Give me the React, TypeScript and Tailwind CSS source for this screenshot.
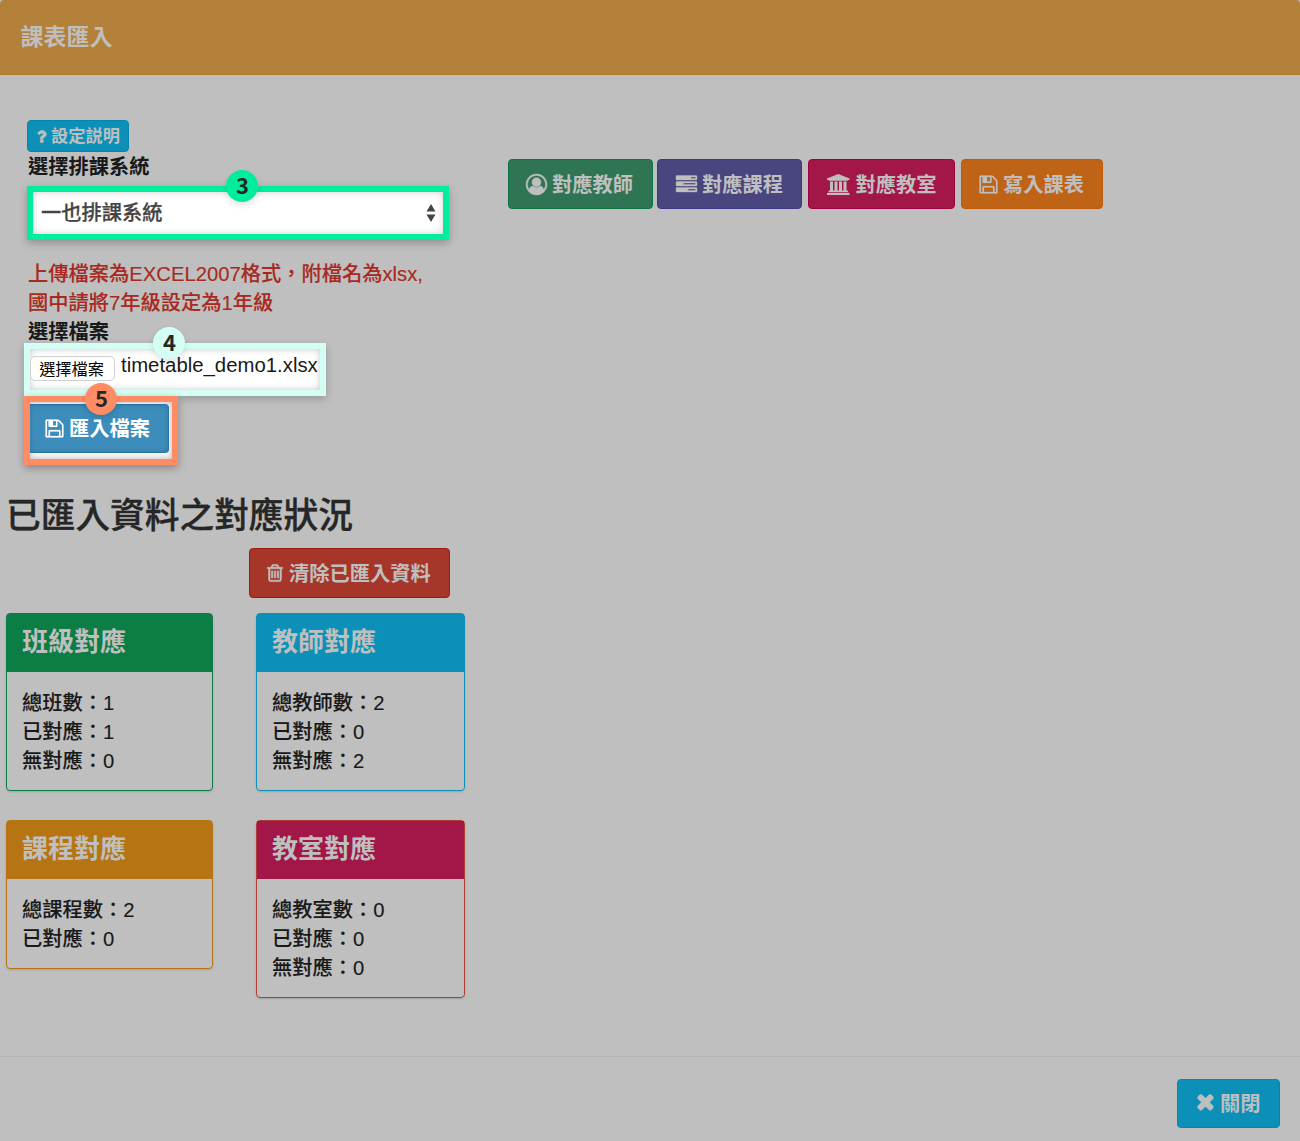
import type { ReactNode } from "react";

const ICONS = {
  floppy: {
    w: 1792,
    d: "M512 1536h768v-384h-768v384zm896 0h128v-896q0-14-10-38.5t-20-34.5l-281-281q-10-10-34-20t-39-10v416q0 40-28 68t-68 28h-576q-40 0-68-28t-28-68v-416h-128v1280h128v-416q0-40 28-68t68-28h832q40 0 68 28t28 68v416zm-384-928v-320q0-13-9.5-22.5t-22.5-9.5h-192q-13 0-22.5 9.5t-9.5 22.5v320q0 13 9.5 22.5t22.5 9.5h192q13 0 22.5-9.5t9.5-22.5zm640 32v928q0 40-28 68t-68 28h-1344q-40 0-68-28t-28-68v-1344q0-40 28-68t68-28h928q40 0 88 20t76 48l280 280q28 28 48 76t20 88z",
  },
  times: {
    w: 1792,
    d: "M1490 1322q0 40-28 68l-136 136q-28 28-68 28t-68-28l-294-294-294 294q-28 28-68 28t-68-28l-136-136q-28-28-28-68t28-68l294-294-294-294q-28-28-28-68t28-68l136-136q28-28 68-28t68 28l294 294 294-294q28-28 68-28t68 28l136 136q28 28 28 68t-28 68l-294 294 294 294q28 28 28 68z",
  },
  question: {
    w: 1792,
    d: "M1088 1256v240q0 16-12 28t-28 12h-240q-16 0-28-12t-12-28v-240q0-16 12-28t28-12h240q16 0 28 12t12 28zm316-600q0 54-15.5 101t-35 76.5-55 59.5-57.5 43.5-61 35.5q-41 23-68.5 65t-27.5 67q0 17-12 32.5t-28 15.5h-240q-15 0-25.5-18.5t-10.5-37.5v-45q0-83 65-156.5t143-108.5q59-27 84-56t25-76q0-42-46.5-74t-107.5-32q-65 0-108 29-35 25-107 115-13 16-31 16-12 0-25-8l-164-125q-13-10-15.5-25t5.5-28q160-266 464-266 80 0 161 31t146 83 106 127.5 41 158.5z",
  },
  university: {
    w: 1920,
    d: "M960 0l960 384v128h-128q0 26-20.5 45t-48.5 19h-1526q-28 0-48.5-19t-20.5-45h-128v-128zM256 640h256v768h128v-768h256v768h128v-768h256v768h128v-768h256v768h59q28 0 48.5 19t20.5 45v64h-1664v-64q0-26 20.5-45t48.5-19h59zM1851 1600q28 0 48.5 19t20.5 45v128h-1920v-128q0-26 20.5-45t48.5-19z",
  },
  trash: {
    w: 1792,
    d: "M704 736v576q0 14-9 23t-23 9h-64q-14 0-23-9t-9-23v-576q0-14 9-23t23-9h64q14 0 23 9t9 23zm256 0v576q0 14-9 23t-23 9h-64q-14 0-23-9t-9-23v-576q0-14 9-23t23-9h64q14 0 23 9t9 23zm256 0v576q0 14-9 23t-23 9h-64q-14 0-23-9t-9-23v-576q0-14 9-23t23-9h64q14 0 23 9t9 23zm128 724v-948h-896v948q0 22 7 40.5t14.5 27 10.5 8.5h832q3 0 10.5-8.5t14.5-27 7-40.5zm-672-1076h448l-48-117q-7-9-17-11h-317q-10 2-17 11zm928 32v64q0 14-9 23t-23 9h-96v948q0 83-47 143.5t-113 60.5h-832q-66 0-113-58.5t-47-141.5v-952h-96q-14 0-23-9t-9-23v-64q0-14 9-23t23-9h309l70-167q15-37 54-63t79-26h320q40 0 79 26t54 63l70 167h309q14 0 23 9t9 23z",
  },
  tasks: {
    w: 1792,
    d: "M1024 1408h640v-128h-640v128zm-384-512h1024v-128h-1024v128zm640-512h384v-128h-384v128zm512 832v256q0 26-19 45t-45 19h-1664q-26 0-45-19t-19-45v-256q0-26 19-45t45-19h1664q26 0 45 19t19 45zm0-512v256q0 26-19 45t-45 19h-1664q-26 0-45-19t-19-45v-256q0-26 19-45t45-19h1664q26 0 45 19t19 45zm0-512v256q0 26-19 45t-45 19h-1664q-26 0-45-19t-19-45v-256q0-26 19-45t45-19h1664q26 0 45 19t19 45z",
  },
  userCircle: {
    w: 1792,
    d: "M896 0q182 0 348 71t286 191 191 286 71 348q0 181-70.5 347t-190.5 286-286 191.5-349 71.5-349-71-285.5-191.5-190.5-286-71-347.5 71-348 191-286 286-191 348-71zm619 1351q149-205 149-455 0-156-61-298t-164-245-245-164-298-61-298 61-245 164-164 245-61 298q0 250 149 455 66-327 306-327 131 128 313 128t313-128q240 0 306 327zm-235-647q0-159-112.5-271.5t-271.5-112.5-271.5 112.5-112.5 271.5 112.5 271.5 271.5 112.5 271.5-112.5 112.5-271.5z",
  },
};

function Icon({ name, className }: { name: keyof typeof ICONS; className: string }) {
  const icon = ICONS[name];
  return (
    <svg
      viewBox={`0 0 ${icon.w} 1792`}
      className={`shrink-0 overflow-visible fill-current stroke-current ${className}`}
      aria-hidden="true"
    >
      <path d={icon.d} />
    </svg>
  );
}

function Button({ className, children }: { className: string; children: ReactNode }) {
  return (
    <button
      type="button"
      className={`flex shrink-0 items-center rounded-[4px] border text-[20.25px] leading-[29px] font-bold whitespace-nowrap ${className}`}
    >
      {children}
    </button>
  );
}

function Step({ n, className }: { n: number; className: string }) {
  return (
    <span
      className={`absolute z-10 flex size-8 items-center justify-center rounded-full font-['Noto_Sans_CJK_TC',sans-serif] text-[22px] leading-[20px] font-bold text-[#262626] ${className}`}
    >
      <span className="-mt-[4px] ml-px">{n}</span>
    </span>
  );
}

type PanelProps = { title: string; rows: string[]; frame: string; head: string };

function Panel({ title, rows, frame, head }: PanelProps) {
  return (
    <section className={`rounded-[4px] border shadow-[0_1px_2px_rgba(0,0,0,0.15)] ${frame}`}>
      <h3 className={`h-[58px] pt-[9px] pl-[15px] text-[26px] leading-[38px] font-bold text-[#bfbfbf] ${head}`}>
        {title}
      </h3>
      <div className="pt-[17px] pb-[14px] pl-[15px] text-[20.25px] leading-[29px] font-medium text-[#191919] [-webkit-text-stroke:0.12px_currentColor]">
        {rows.map((row) => (
          <p key={row}>{row}</p>
        ))}
      </div>
    </section>
  );
}

export default function App() {
  return (
    <div className="flex h-[1141px] w-[1300px] flex-col overflow-hidden bg-[#bfbfbf] font-['Liberation_Sans','Noto_Sans_CJK_TC',sans-serif] text-[#191919]">
      <header className="flex h-[75px] shrink-0 items-center rounded-t-[4px] border-b border-[#b37a2b] bg-[#b4813a] pl-[20.5px]">
        <h1 className="text-[23px] leading-[33px] font-bold text-[#bfbfbf]">課表匯入</h1>
      </header>

      <main className="h-[981px] shrink-0 pt-[45px]">
        <div className="flex h-[373px]">
          <div className="w-[480px] pl-[27px]">
            <Button className="h-8 w-[102px] gap-px border-[#0887ab] bg-[#0d90b8] pl-[5px] !text-[17.25px] text-[#bfbfbf]">
              <Icon name="question" className="size-[17px] stroke-[60]" />
              設定説明
            </Button>
            <label className="block h-[29px] pt-px pl-px text-[20.25px] leading-[29px] font-bold">選擇排課系統</label>

            <div className="relative mt-[5px] flex h-[54px] w-[422px] items-center justify-between border-[6px] border-[#00ed9b] bg-white pr-[7px] pl-[8px] shadow-[inset_0_0_7px_rgba(0,0,0,0.2),0_3px_8px_rgba(0,0,0,0.25)]">
              <Step n={3} className="top-[-22px] left-[193px] bg-[#00ed9b] shadow-[0_3px_6px_rgba(0,0,0,0.12)]" />
              <span className="text-[20.25px] leading-[29px] font-medium text-[#444] [-webkit-text-stroke:0.25px_currentColor]">
                一也排課系統
              </span>
              <svg viewBox="0 0 10 18" className="h-[18px] w-[10px] fill-[#444]" aria-hidden="true">
                <path d="M5 0l4.5 7.5h-9zM5 18l4.5-7.5h-9z" />
              </svg>
            </div>

            <p className="mt-[20px] pl-px text-[20.25px] leading-[29px] font-medium whitespace-nowrap text-[#a82a1e] [-webkit-text-stroke:0.12px_currentColor]">
              上傳檔案為EXCEL2007格式，附檔名為xlsx,
              <br />
              國中請將7年級設定為1年級
            </p>
            <label className="block h-[25px] pl-px text-[20.25px] leading-[29px] font-bold">選擇檔案</label>

            <div className="relative -ml-[3px] flex h-[53px] w-[302px] items-start border-[6px] border-[#d3fff4] bg-white shadow-[inset_0_0_7px_rgba(0,0,0,0.22),0_3px_8px_rgba(0,0,0,0.2)]">
              <Step n={4} className="top-[-22px] left-[123px] bg-[#d3fff4] shadow-[0_3px_6px_rgba(0,0,0,0.12)]" />
              <span className="mt-[7px] flex h-[25px] w-[85px] items-center justify-center rounded-[5px] border border-[#d0d0d0] bg-white pt-[2px] pr-[2px] text-[16.2px] leading-[23px] text-black">
                選擇檔案
              </span>
              <span className="mt-[5px] ml-[6px] text-[20.35px] leading-[23px] whitespace-nowrap">
                timetable_demo1.xlsx
              </span>
            </div>

            <div className="relative -ml-[3px] h-[69px] w-[154px] border-[6px] border-[#ff8c64] bg-[#f7f7f7] pt-[2px] shadow-[inset_0_0_6px_rgba(0,0,0,0.25),0_3px_8px_rgba(0,0,0,0.3)]">
              <Step n={5} className="top-[-19px] left-[55px] bg-[#ff8c64] shadow-[0_3px_6px_rgba(0,0,0,0.15)]" />
              <Button className="h-[49px] w-[139px] gap-[4px] rounded-l-none border-l-0 border-[#2f74a0] bg-[#3c8dbc] pt-[2px] pl-[14px] text-white shadow-[inset_0_0_5px_rgba(0,0,0,0.18)]">
                <Icon name="floppy" className="-mt-[2px] size-[21px] stroke-[15]" />
                匯入檔案
              </Button>
            </div>
          </div>

          <div className="flex items-start pt-[39px] pl-[28px]">
            <Button className="mr-[4px] h-[50px] w-[145px] gap-[5px] border-[#0c7444] bg-[#2f7554] pt-[2px] pl-[17px] text-[#bfbfbf]">
              <Icon name="userCircle" className="-mt-[2px] size-[21px] stroke-[40]" />
              對應教師
            </Button>
            <Button className="mr-[6px] h-[50px] w-[145px] gap-[5px] border-[#3d3884] bg-[#49457e] pt-[2px] pl-[18px] text-[#bfbfbf]">
              <Icon name="tasks" className="-mt-[2px] size-[21px] stroke-[30]" />
              對應課程
            </Button>
            <Button className="mr-[6px] h-[50px] w-[147px] gap-[6px] border-[#a10042] bg-[#a21648] pt-[2px] pl-[18px] text-[#bfbfbf]">
              <Icon name="university" className="-mt-[2px] h-[21px] w-[22.5px] stroke-0" />
              對應教室
            </Button>
            <Button className="h-[50px] w-[142px] gap-[4px] border-[#bf5c07] bg-[#bf6416] pt-[2px] pl-[16px] text-[#bfbfbf]">
              <Icon name="floppy" className="-mt-[2px] size-[21px] stroke-[15]" />
              寫入課表
            </Button>
          </div>
        </div>

        <h2 className="h-[55px] pl-[6px] text-[34.7px] leading-[46px] font-medium text-[#262626] [-webkit-text-stroke:0.35px_currentColor]">
          已匯入資料之對應狀況
        </h2>
        <Button className="ml-[249px] h-[50px] w-[201px] gap-[4px] border-[#9f1d10] bg-[#a6362a] pt-[2px] pl-[15px] text-[#bfbfbf]">
          <Icon name="trash" className="-mt-[2px] size-[20px] stroke-[50]" />
          清除已匯入資料
        </Button>

        <div className="mt-[15px] ml-[6px] grid grid-cols-[207px_209px] items-start gap-x-[43px] gap-y-[29px]">
          <Panel title="班級對應" rows={["總班數：1", "已對應：1", "無對應：0"]} frame="border-[#0c7d44]" head="bg-[#0c7d44]" />
          <Panel title="教師對應" rows={["總教師數：2", "已對應：0", "無對應：2"]} frame="border-[#0d90b8]" head="bg-[#0d90b8]" />
          <Panel title="課程對應" rows={["總課程數：2", "已對應：0"]} frame="border-[#b67512]" head="bg-[#b67512]" />
          <Panel title="教室對應" rows={["總教室數：0", "已對應：0", "無對應：0"]} frame="border-[#b03d35]" head="bg-[#a21648]" />
        </div>
      </main>

      <footer className="flex flex-1 items-start justify-end border-t border-[#b5b5b5] pt-[22px] pr-[20px]">
        <Button className="h-[49px] w-[103px] gap-[3px] border-[#0887ab] bg-[#0d90b8] pt-px pl-[16px] text-[#bfbfbf]">
          <Icon name="times" className="-mt-[5px] size-[23px] stroke-[80]" />
          關閉
        </Button>
      </footer>
    </div>
  );
}
